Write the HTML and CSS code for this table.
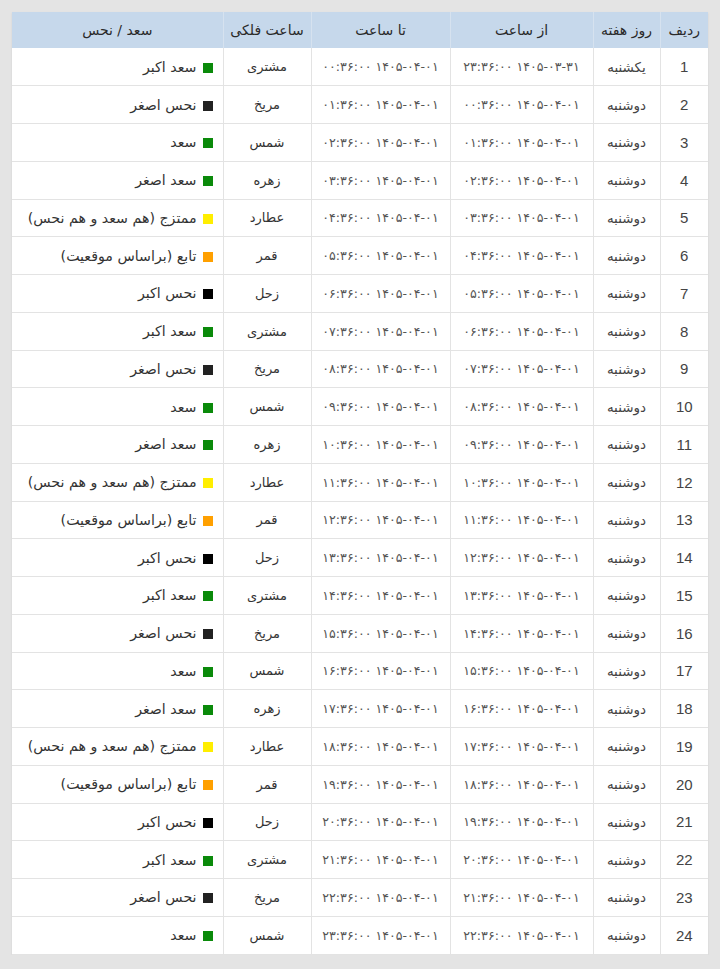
FILE: index.html
```html
<!DOCTYPE html>
<html lang="fa" dir="rtl">
<head>
<meta charset="utf-8">
<title>ساعات فلکی</title>
<link rel="stylesheet" href="styles.css">
</head>
<body>
<div class="wrap">
<table class="hours">
<colgroup>
<col class="c-idx"><col class="c-day"><col class="c-from"><col class="c-to"><col class="c-planet"><col class="c-luck">
</colgroup>
<thead>
<tr><th>ردیف</th><th>روز هفته</th><th>از ساعت</th><th>تا ساعت</th><th>ساعت فلکی</th><th class="luck">سعد / نحس</th></tr>
</thead>
<tbody>
<tr><td class="idx">1</td><td class="day">یکشنبه</td><td class="dt">۱۴۰۵-۰۳-۳۱ ۲۳:۳۶:۰۰</td><td class="dt">۱۴۰۵-۰۴-۰۱ ۰۰:۳۶:۰۰</td><td>مشتری</td><td class="luck"><span class="sq green"></span>سعد اکبر</td></tr>
<tr><td class="idx">2</td><td class="day">دوشنبه</td><td class="dt">۱۴۰۵-۰۴-۰۱ ۰۰:۳۶:۰۰</td><td class="dt">۱۴۰۵-۰۴-۰۱ ۰۱:۳۶:۰۰</td><td>مریخ</td><td class="luck"><span class="sq dark"></span>نحس اصغر</td></tr>
<tr><td class="idx">3</td><td class="day">دوشنبه</td><td class="dt">۱۴۰۵-۰۴-۰۱ ۰۱:۳۶:۰۰</td><td class="dt">۱۴۰۵-۰۴-۰۱ ۰۲:۳۶:۰۰</td><td>شمس</td><td class="luck"><span class="sq green"></span>سعد</td></tr>
<tr><td class="idx">4</td><td class="day">دوشنبه</td><td class="dt">۱۴۰۵-۰۴-۰۱ ۰۲:۳۶:۰۰</td><td class="dt">۱۴۰۵-۰۴-۰۱ ۰۳:۳۶:۰۰</td><td>زهره</td><td class="luck"><span class="sq green"></span>سعد اصغر</td></tr>
<tr><td class="idx">5</td><td class="day">دوشنبه</td><td class="dt">۱۴۰۵-۰۴-۰۱ ۰۳:۳۶:۰۰</td><td class="dt">۱۴۰۵-۰۴-۰۱ ۰۴:۳۶:۰۰</td><td>عطارد</td><td class="luck"><span class="sq yellow"></span>ممتزج (هم سعد و هم نحس)</td></tr>
<tr><td class="idx">6</td><td class="day">دوشنبه</td><td class="dt">۱۴۰۵-۰۴-۰۱ ۰۴:۳۶:۰۰</td><td class="dt">۱۴۰۵-۰۴-۰۱ ۰۵:۳۶:۰۰</td><td>قمر</td><td class="luck"><span class="sq orange"></span>تابع (براساس موقعیت)</td></tr>
<tr><td class="idx">7</td><td class="day">دوشنبه</td><td class="dt">۱۴۰۵-۰۴-۰۱ ۰۵:۳۶:۰۰</td><td class="dt">۱۴۰۵-۰۴-۰۱ ۰۶:۳۶:۰۰</td><td>زحل</td><td class="luck"><span class="sq black"></span>نحس اکبر</td></tr>
<tr><td class="idx">8</td><td class="day">دوشنبه</td><td class="dt">۱۴۰۵-۰۴-۰۱ ۰۶:۳۶:۰۰</td><td class="dt">۱۴۰۵-۰۴-۰۱ ۰۷:۳۶:۰۰</td><td>مشتری</td><td class="luck"><span class="sq green"></span>سعد اکبر</td></tr>
<tr><td class="idx">9</td><td class="day">دوشنبه</td><td class="dt">۱۴۰۵-۰۴-۰۱ ۰۷:۳۶:۰۰</td><td class="dt">۱۴۰۵-۰۴-۰۱ ۰۸:۳۶:۰۰</td><td>مریخ</td><td class="luck"><span class="sq dark"></span>نحس اصغر</td></tr>
<tr><td class="idx">10</td><td class="day">دوشنبه</td><td class="dt">۱۴۰۵-۰۴-۰۱ ۰۸:۳۶:۰۰</td><td class="dt">۱۴۰۵-۰۴-۰۱ ۰۹:۳۶:۰۰</td><td>شمس</td><td class="luck"><span class="sq green"></span>سعد</td></tr>
<tr><td class="idx">11</td><td class="day">دوشنبه</td><td class="dt">۱۴۰۵-۰۴-۰۱ ۰۹:۳۶:۰۰</td><td class="dt">۱۴۰۵-۰۴-۰۱ ۱۰:۳۶:۰۰</td><td>زهره</td><td class="luck"><span class="sq green"></span>سعد اصغر</td></tr>
<tr><td class="idx">12</td><td class="day">دوشنبه</td><td class="dt">۱۴۰۵-۰۴-۰۱ ۱۰:۳۶:۰۰</td><td class="dt">۱۴۰۵-۰۴-۰۱ ۱۱:۳۶:۰۰</td><td>عطارد</td><td class="luck"><span class="sq yellow"></span>ممتزج (هم سعد و هم نحس)</td></tr>
<tr><td class="idx">13</td><td class="day">دوشنبه</td><td class="dt">۱۴۰۵-۰۴-۰۱ ۱۱:۳۶:۰۰</td><td class="dt">۱۴۰۵-۰۴-۰۱ ۱۲:۳۶:۰۰</td><td>قمر</td><td class="luck"><span class="sq orange"></span>تابع (براساس موقعیت)</td></tr>
<tr><td class="idx">14</td><td class="day">دوشنبه</td><td class="dt">۱۴۰۵-۰۴-۰۱ ۱۲:۳۶:۰۰</td><td class="dt">۱۴۰۵-۰۴-۰۱ ۱۳:۳۶:۰۰</td><td>زحل</td><td class="luck"><span class="sq black"></span>نحس اکبر</td></tr>
<tr><td class="idx">15</td><td class="day">دوشنبه</td><td class="dt">۱۴۰۵-۰۴-۰۱ ۱۳:۳۶:۰۰</td><td class="dt">۱۴۰۵-۰۴-۰۱ ۱۴:۳۶:۰۰</td><td>مشتری</td><td class="luck"><span class="sq green"></span>سعد اکبر</td></tr>
<tr><td class="idx">16</td><td class="day">دوشنبه</td><td class="dt">۱۴۰۵-۰۴-۰۱ ۱۴:۳۶:۰۰</td><td class="dt">۱۴۰۵-۰۴-۰۱ ۱۵:۳۶:۰۰</td><td>مریخ</td><td class="luck"><span class="sq dark"></span>نحس اصغر</td></tr>
<tr><td class="idx">17</td><td class="day">دوشنبه</td><td class="dt">۱۴۰۵-۰۴-۰۱ ۱۵:۳۶:۰۰</td><td class="dt">۱۴۰۵-۰۴-۰۱ ۱۶:۳۶:۰۰</td><td>شمس</td><td class="luck"><span class="sq green"></span>سعد</td></tr>
<tr><td class="idx">18</td><td class="day">دوشنبه</td><td class="dt">۱۴۰۵-۰۴-۰۱ ۱۶:۳۶:۰۰</td><td class="dt">۱۴۰۵-۰۴-۰۱ ۱۷:۳۶:۰۰</td><td>زهره</td><td class="luck"><span class="sq green"></span>سعد اصغر</td></tr>
<tr><td class="idx">19</td><td class="day">دوشنبه</td><td class="dt">۱۴۰۵-۰۴-۰۱ ۱۷:۳۶:۰۰</td><td class="dt">۱۴۰۵-۰۴-۰۱ ۱۸:۳۶:۰۰</td><td>عطارد</td><td class="luck"><span class="sq yellow"></span>ممتزج (هم سعد و هم نحس)</td></tr>
<tr><td class="idx">20</td><td class="day">دوشنبه</td><td class="dt">۱۴۰۵-۰۴-۰۱ ۱۸:۳۶:۰۰</td><td class="dt">۱۴۰۵-۰۴-۰۱ ۱۹:۳۶:۰۰</td><td>قمر</td><td class="luck"><span class="sq orange"></span>تابع (براساس موقعیت)</td></tr>
<tr><td class="idx">21</td><td class="day">دوشنبه</td><td class="dt">۱۴۰۵-۰۴-۰۱ ۱۹:۳۶:۰۰</td><td class="dt">۱۴۰۵-۰۴-۰۱ ۲۰:۳۶:۰۰</td><td>زحل</td><td class="luck"><span class="sq black"></span>نحس اکبر</td></tr>
<tr><td class="idx">22</td><td class="day">دوشنبه</td><td class="dt">۱۴۰۵-۰۴-۰۱ ۲۰:۳۶:۰۰</td><td class="dt">۱۴۰۵-۰۴-۰۱ ۲۱:۳۶:۰۰</td><td>مشتری</td><td class="luck"><span class="sq green"></span>سعد اکبر</td></tr>
<tr><td class="idx">23</td><td class="day">دوشنبه</td><td class="dt">۱۴۰۵-۰۴-۰۱ ۲۱:۳۶:۰۰</td><td class="dt">۱۴۰۵-۰۴-۰۱ ۲۲:۳۶:۰۰</td><td>مریخ</td><td class="luck"><span class="sq dark"></span>نحس اصغر</td></tr>
<tr><td class="idx">24</td><td class="day">دوشنبه</td><td class="dt">۱۴۰۵-۰۴-۰۱ ۲۲:۳۶:۰۰</td><td class="dt">۱۴۰۵-۰۴-۰۱ ۲۳:۳۶:۰۰</td><td>شمس</td><td class="luck"><span class="sq green"></span>سعد</td></tr>
</tbody>
</table>
</div>
</body>
</html>
```
FILE: styles.css
```css
html, body {
  margin: 0;
  padding: 0;
  background: #e4e4e4;
}
body {
  font-family: "DejaVu Sans", "Liberation Sans", sans-serif;
  color: #333;
}
.wrap {
  padding: 12px 12px 0 12px;
}
.hours {
  width: 696px;
  table-layout: fixed;
  border-collapse: collapse;
  background: #fff;
  box-shadow: 0 1px 2px rgba(0,0,0,0.08);
}
.c-idx { width: 48px; }
.c-day { width: 67px; }
.c-from { width: 143px; }
.c-to { width: 139px; }
.c-planet { width: 88px; }
.c-luck { width: 211px; }

.hours thead tr { height: 36px; }
.hours th {
  background: #c6d8eb;
  font-weight: normal;
  font-size: 14px;
  color: #2a2a2a;
  text-align: center;
  padding: 0 6px;
  border-left: 1px solid #d6e2ef;
}
.hours th:last-child { border-left: none; }
.hours tbody tr { height: 37.75px; }
.hours td {
  text-align: center;
  font-size: 13px;
  color: #333;
  padding: 0 6px;
  border: 1px solid #e3e3e3;
  white-space: nowrap;
  vertical-align: middle;
}
.hours tbody tr:first-child td { border-top: none; }
.hours td:first-child { border-right: none; }
.hours td:last-child { border-left: none; }
.hours td.idx {
  font-family: "Liberation Sans", Arial, sans-serif;
  font-size: 15px;
  color: #444;
}
.hours td.day {
  font-size: 13.5px;
  color: #444;
}
.hours td.dt {
  font-size: 12.6px;
  color: #555;
}
.hours td.luck {
  font-size: 14.2px;
}
.hours .luck {
  text-align: right;
  padding-right: 10px;
}
.hours th.luck {
  text-align: center;
  padding-right: 6px;
}
.sq {
  display: inline-block;
  width: 10px;
  height: 10px;
  margin-left: 6px;
  vertical-align: -1px;
}
.green { background: #0a8a0a; }
.dark { background: #222; }
.black { background: #000; }
.yellow { background: #ffee00; }
.orange { background: #ffa000; }
```
